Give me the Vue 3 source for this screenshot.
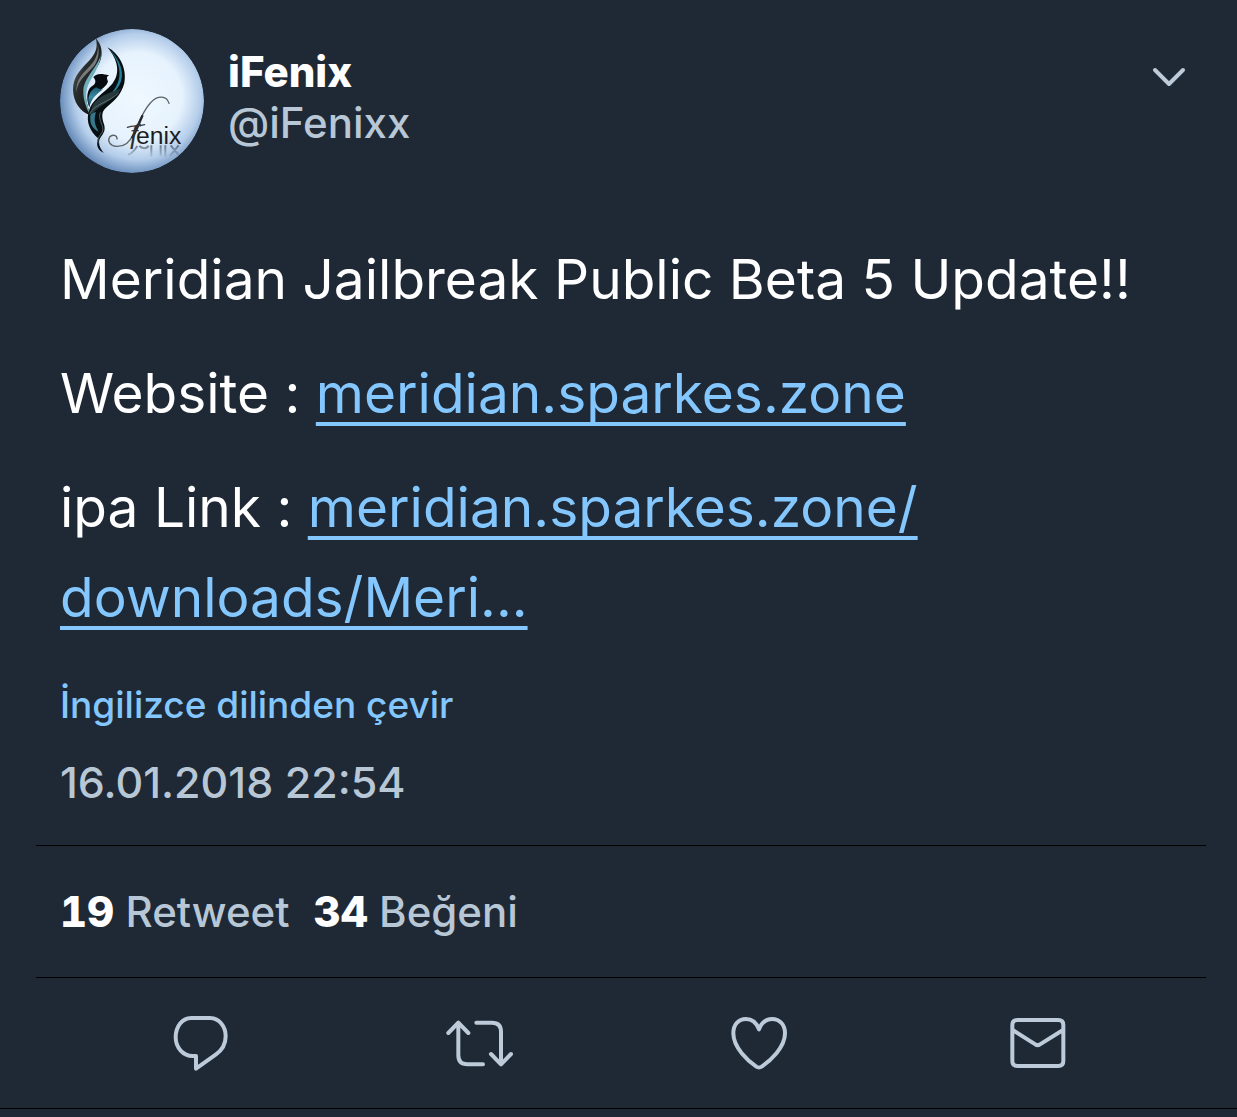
<template>
  <article class="tweet">
    <header class="author">
      <svg class="avatar" viewBox="30 27 432 432" role="img" aria-label="Fenix">
        <defs>
          <radialGradient id="sky" cx="0.54" cy="0.47" r="0.56">
            <stop offset="0" stop-color="#eff8ff" />
            <stop offset="0.55" stop-color="#e6f2fd" />
            <stop offset="0.78" stop-color="#b4cdea" />
            <stop offset="1" stop-color="#5b82b3" />
          </radialGradient>
          <linearGradient id="wing" x1="0" y1="0" x2="1" y2="1">
            <stop offset="0" stop-color="#8b8d8c" />
            <stop offset="0.4" stop-color="#2a2d2e" />
            <stop offset="1" stop-color="#050809" />
          </linearGradient>
          <linearGradient id="teal" x1="0" y1="0" x2="0" y2="1">
            <stop offset="0" stop-color="#1d5a6d" />
            <stop offset="0.5" stop-color="#3b8ba6" />
            <stop offset="1" stop-color="#10394a" />
          </linearGradient>
          <linearGradient id="fade" gradientUnits="userSpaceOnUse" x1="0" y1="376" x2="0" y2="412">
            <stop offset="0" stop-color="#4c5a6c" stop-opacity="0.75" />
            <stop offset="1" stop-color="#4c5a6c" stop-opacity="0.1" />
          </linearGradient>
        </defs>
        <circle cx="246" cy="243" r="216" fill="url(#sky)" />
        <!-- left wing -->
        <path d="M137 54C160 78 160 112 143 139C126 165 108 188 107 216C106 244 117 265 119 285C91 276 70 246 69 211C68 174 88 153 110 130C135 105 146 84 137 54Z" fill="url(#wing)" />
        <path d="M153 100C149 135 102 172 100 211C99 240 109 263 119 284C115 258 104 238 110 209C116 178 152 145 153 100Z" fill="#70aebb" />
        <path d="M137 60C151 84 142 116 117 141C93 165 75 184 80 221C80 180 111 164 132 138C148 116 151 86 137 60Z" fill="#777b7c" />
        <!-- right wing -->
        <path d="M172 82C207 99 232 146 223 189C214 225 191 244 168 263C153 276 155 292 163 316C169 342 147 349 147 366C147 380 154 389 161 399C144 391 137 376 144 355C119 333 108 305 116 276C124 238 164 218 187 191C212 160 204 119 172 82Z" fill="#080f12" />
        <path d="M174 84C214 120 226 164 208 196C200 210 190 220 178 228C196 206 206 190 208 168C211 140 198 108 174 84Z" fill="#287f98" />
        <path d="M214 205C193 215 163 221 144 238C124 254 121 274 121 297C134 256 186 251 214 205Z" fill="#27383c" />
        <path d="M122 284C117 307 126 325 146 335C135 316 130 301 138 276C132 278 126 280 122 284Z" fill="#35778b" />
        <path d="M118 283C131 252 176 248 206 219M151 277C142 298 165 321 157 336C151 345 141 354 144 370" fill="none" stroke="#7d8b8c" stroke-width="2" />
        <!-- body and head -->
        <path d="M130 172C136 163 150 158 178 167C169 168 170 174 174 184C170 198 158 206 145 215C128 227 118 241 118 262C107 233 111 205 130 196C140 188 136 178 130 172Z" fill="#060c10" />
        <path d="M139 202C119 211 110 232 118 262C123 236 141 222 159 208C151 209 144 206 139 202Z" fill="url(#teal)" />
        <!-- flourish around the wordmark -->
        <path d="M357 250C350 226 323 225 303 247C279 272 267 306 249 344C238 370 218 380 199 379C181 378 171 363 179 351C187 342 202 345 201 357" fill="none" stroke="#5d6267" stroke-width="4" stroke-linecap="round" />
        <path d="M277 288C266 311 259 334 247 352" fill="none" stroke="#25282c" stroke-width="7" stroke-linecap="round" />
        <path d="M232 322C248 316 266 319 284 314" fill="none" stroke="#3c4045" stroke-width="4" stroke-linecap="round" />
        <text class="mark-f" x="240" y="368">f</text>
        <text class="mark" x="258" y="372">enix</text>
        <path d="M262 378C252 394 244 402 234 404M268 378Q284 392 296 378M304 376V410M332 376V408M346 376V410M360 408L386 376M362 376L388 408" fill="none" stroke="url(#fade)" stroke-width="6" />
      </svg>
      <div class="names">
        <strong>iFenix</strong>
        <span>@iFenixx</span>
      </div>
      <button class="more" type="button" aria-label="Menü">
        <svg viewBox="0 0 36 24"><path d="M4 5L18 19L32 5" /></svg>
      </button>
    </header>

    <div class="body">
      <p>Meridian Jailbreak Public Beta 5 Update!!</p>
      <p>Website : <a href="#">meridian.sparkes.zone</a></p>
      <p>ipa Link : <a href="#">meridian.sparkes.zone/<wbr />downloads/Meri...</a></p>
    </div>

    <a class="translate" href="#">İngilizce dilinden çevir</a>
    <time class="date" datetime="2018-01-16T22:54">16.01.2018 22:54</time>

    <div class="stats">
      <span v-for="item in stats" :key="item.label"><b>{{ item.count }}</b> {{ item.label }}</span>
    </div>

    <footer class="actions">
      <button v-for="item in actions" :key="item.label" type="button" :aria-label="item.label">
        <svg :viewBox="item.box"><path :d="item.path" /></svg>
      </button>
    </footer>
  </article>
</template>

<script setup>
const stats = [
  { count: 19, label: 'Retweet' },
  { count: 34, label: 'Beğeni' },
]

const actions = [
  {
    label: 'Yanıtla',
    box: '1 0 300 270',
    path: 'M125 54H181C207 54 228 78 228 109C228 133 217 151 198 164L139 206V168H129C101 168 78 143 78 112C78 79 98 54 125 54Z',
  },
  {
    label: 'Retweet',
    box: '-2 0 300 270',
    path: 'M56 99L86 68L116 99M86 70V166Q86 193 113 193H160M140 68H187Q214 68 214 95V192M184 162L214 193L244 162',
  },
  {
    label: 'Beğen',
    box: '-6 0 300 270',
    path: 'M147 88C139 67 124 57 108 57C84 57 70 75 70 100C70 143 114 183 139 200Q147 205 155 200C180 183 225 143 225 100C225 75 210 57 186 57C170 57 155 67 147 88Z',
  },
  {
    label: 'Mesaj',
    box: '-8 0 300 270',
    path: 'M83 60H206Q221 60 221 75V183Q221 198 206 198H83Q68 198 68 183V75Q68 60 83 60ZM69 90L137 133Q144 138 151 133L220 90',
  },
]
</script>

<style>
body {
  margin: 0;
  background: #1f2935;
}
</style>

<style scoped>
.tweet {
  display: flex;
  flex-direction: column;
  padding-top: 29px;
  border-bottom: 1px solid #000;
  color: #fff;
  font-family: Inter, "Noto Sans", sans-serif;
}

button {
  padding: 0;
  border: none;
  background: none;
  cursor: pointer;
}

button svg {
  display: block;
  fill: none;
  stroke: #bccad9;
  stroke-linecap: round;
  stroke-linejoin: round;
}

.author {
  display: flex;
  align-items: flex-start;
  padding: 0 48px 0 60px;
}

.avatar {
  flex: none;
  width: 144px;
  height: 144px;
  border-radius: 50%;
}

.mark {
  font-family: "Liberation Sans Narrow", "Liberation Sans", sans-serif;
  font-size: 74px;
  fill: #1a1c20;
}

.mark-f {
  font-family: "Liberation Serif", serif;
  font-size: 84px;
  font-style: italic;
  fill: #2d3034;
}

.names {
  display: flex;
  flex: 1;
  flex-direction: column;
  padding: 17px 0 0 24px;
  font-size: 42px;
  line-height: 51px;
}

.names strong {
  font-weight: 800;
}

.names span {
  color: #b8c7d6;
  font-weight: 500;
}

.more {
  margin-top: 36px;
}

.more svg {
  width: 40px;
  height: 24px;
  stroke-width: 4;
}

.body {
  display: flex;
  flex-direction: column;
  gap: 24px;
  margin-top: 61px;
  padding: 0 60px;
  font-size: 55px;
  line-height: 90px;
}

.body p {
  margin: 0;
}

.body a {
  color: #84c7ff;
  text-decoration-thickness: 4px;
  text-underline-offset: 9px;
  text-decoration-skip-ink: none;
}

.translate {
  align-self: flex-start;
  margin: 39px 60px 0;
  color: #84c7ff;
  font-size: 37px;
  font-weight: 500;
  line-height: 48px;
  text-decoration: none;
}

.date {
  margin: 28px 60px 0;
  color: #b8c7d6;
  font-size: 43px;
  font-weight: 500;
  line-height: 51px;
}

.stats {
  display: flex;
  gap: 24px;
  margin: 37px 31px 0 36px;
  padding: 40px 24px;
  border-top: 1px solid #000;
  border-bottom: 1px solid #000;
  color: #b8c7d6;
  font-size: 42px;
  font-variant-numeric: tabular-nums;
  font-weight: 500;
  line-height: 51px;
}

.stats b {
  color: #fff;
  font-weight: 800;
}

.actions {
  display: grid;
  grid-template-columns: repeat(4, 1fr);
  padding: 22px 60px 18px;
}

.actions button {
  display: flex;
  justify-content: center;
}

.actions svg {
  width: 100px;
  height: 90px;
  stroke-width: 12;
}
</style>
